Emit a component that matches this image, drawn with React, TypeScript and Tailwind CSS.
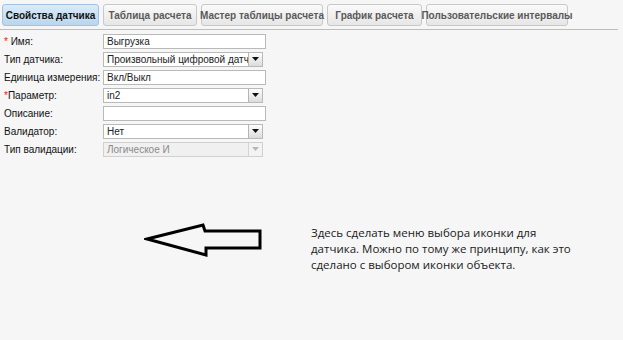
import React from "react";

const tabs = [
  { label: "Свойства датчика", w: 97, active: true },
  { label: "Таблица расчета", w: 94 },
  { label: "Мастер таблицы расчета", w: 122 },
  { label: "График расчета", w: 95 },
  { label: "Пользовательские интервалы", w: 142 },
];

function Arrow({ disabled }: { disabled?: boolean }) {
  return (
    <div
      className={`w-[14px] h-[13px] border-l flex items-center justify-center ${
        disabled ? "border-[#d4d4d4] bg-[#f3f3f3]" : "border-[#b5b5b5] bg-gradient-to-b from-[#fdfdfd] to-[#dcdcdc]"
      }`}
    >
      <svg width="7" height="4" viewBox="0 0 7 4">
        <path d="M0 0h7L3.5 4z" fill={disabled ? "#b8b8b8" : "#111"} />
      </svg>
    </div>
  );
}

function Row({
  label,
  req,
  value,
  select,
  disabled,
}: {
  label: string;
  req?: "sp" | "tight";
  value?: string;
  select?: boolean;
  disabled?: boolean;
}) {
  return (
    <div className="flex items-center h-[18px]">
      <div className="w-[100px] pl-[4px] text-[10px] text-[#111] whitespace-nowrap">
        {req === "sp" && <span className="text-[#d22]">* </span>}
        {req === "tight" && <span className="text-[#d22]">*</span>}
        {label}
      </div>
      <div
        className={`ml-[3px] flex items-center h-[15px] border ${
          select ? "w-[160px]" : "w-[163px]"
        } ${disabled ? "border-[#d0d0d0] bg-[#f0f0f0]" : "border-[#b9b9b9] bg-white"}`}
      >
        <div
          className={`flex-1 min-w-0 px-[3px] text-[10px] leading-[13px] whitespace-nowrap overflow-hidden ${
            disabled ? "text-[#8a8a8a]" : "text-[#222]"
          }`}
        >
          {value}
        </div>
        {select && <Arrow disabled={disabled} />}
      </div>
    </div>
  );
}

export default function App() {
  return (
    <div className="w-[623px] h-[340px] bg-[#f6f6f6] relative [font-family:'Liberation_Sans',Arial,sans-serif] overflow-hidden">
      <div className="flex gap-[4px] pl-[2px] pt-[4px] pr-[5px] border-b border-[#bdbdbd] pb-[3px] w-[618px]">
        {tabs.map((t) => (
          <div
            key={t.label}
            style={{ width: t.w }}
            className={`h-[22px] rounded-[3px] border flex items-center justify-center text-[10px] font-bold whitespace-nowrap ${
              t.active
                ? "border-[#9fc3e0] bg-gradient-to-b from-[#dcebf7] to-[#b8d6ee] text-[#111]"
                : "border-[#c8c8c8] bg-gradient-to-b from-[#fafafa] to-[#e6e6e6] text-[#5a5a5a]"
            }`}
          >
            {t.label}
          </div>
        ))}
      </div>

      <div className="flex flex-col pt-[2px]">
        <Row label="Имя:" req="sp" value="Выгрузка" />
        <Row label="Тип датчика:" value="Произвольный цифровой датч" select />
        <Row label="Единица измерения:" value="Вкл/Выкл" />
        <Row label="Параметр:" req="tight" value="in2" select />
        <Row label="Описание:" value="" />
        <Row label="Валидатор:" value="Нет" select />
        <Row label="Тип валидации:" value="Логическое И" select disabled />
      </div>

      <svg className="absolute left-[144px] top-[222px]" width="122" height="36" viewBox="0 0 122 36">
        <path
          d="M3 17 L59 3 L61 9 L116 9 L116 26 L62 26 L62 33 Z"
          fill="none"
          stroke="#000"
          strokeWidth="3"
          strokeLinejoin="miter"
        />
      </svg>

      <div className="absolute left-[311px] top-[225px] w-[270px] text-[11.5px] leading-[16px] text-[#1a1a1a] [font-family:'Open_Sans',sans-serif]">
        Здесь сделать меню выбора иконки для
        <br />
        датчика. Можно по тому же принципу, как это
        <br />
        сделано с выбором иконки объекта.
      </div>
    </div>
  );
}
